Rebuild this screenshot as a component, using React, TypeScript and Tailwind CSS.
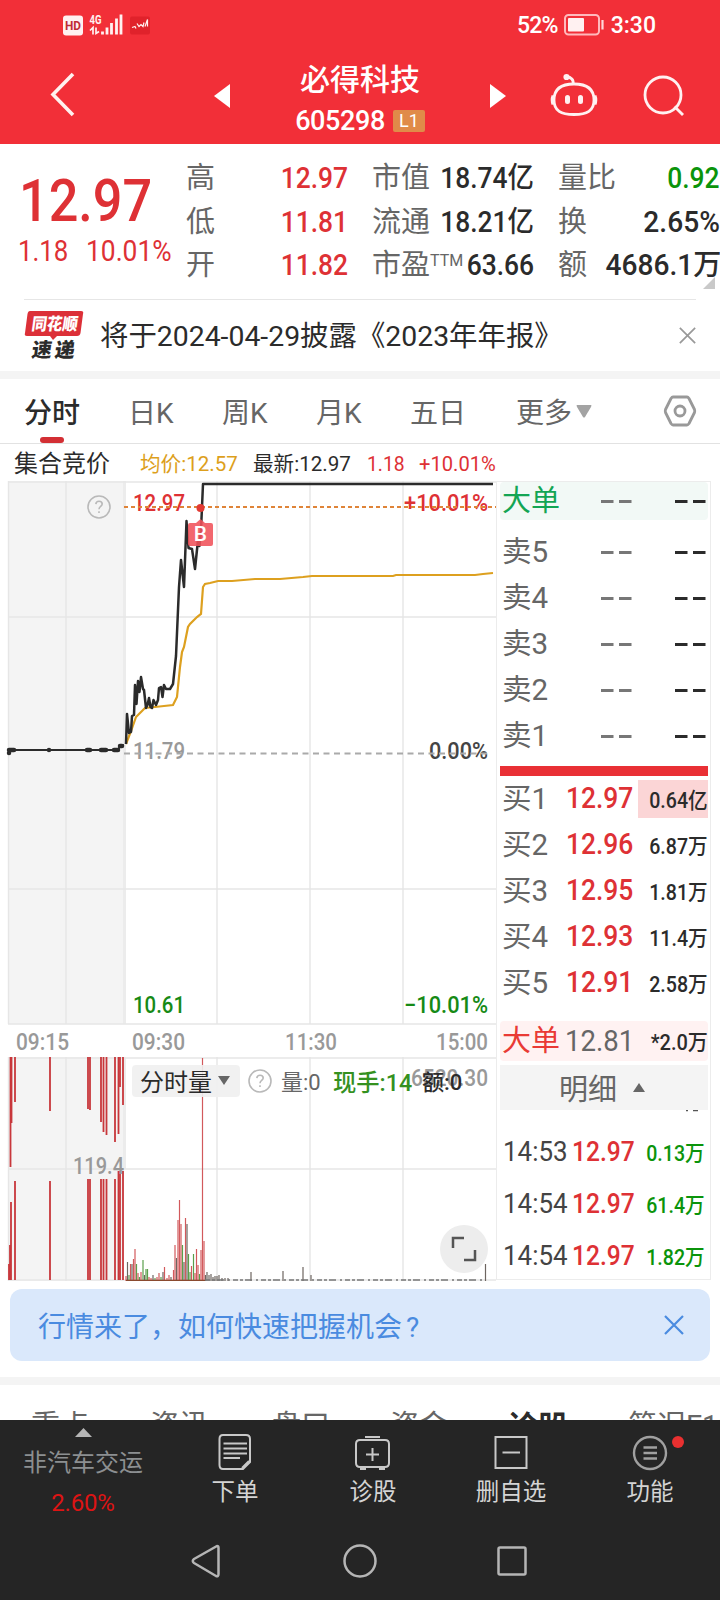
import type { ReactNode } from "react";
import clsx from "clsx";
import { twMerge } from "tailwind-merge";

const FONT = "font-['Roboto','Noto_Sans_CJK_SC',sans-serif]";

const QUOTES = [
  ["高", "12.97", "市值", "18.74亿", "量比", "0.92"],
  ["低", "11.81", "流通", "18.21亿", "换", "2.65%"],
  ["开", "11.82", "市盈", "63.66", "额", "4686.1万"],
];

const SELLS = ["卖5", "卖4", "卖3", "卖2", "卖1"];

const BUYS = [
  ["买1", "12.97", "0.64亿"],
  ["买2", "12.96", "6.87万"],
  ["买3", "12.95", "1.81万"],
  ["买4", "12.93", "11.4万"],
  ["买5", "12.91", "2.58万"],
];

const TICKS = [
  ["14:53", "12.97", "0.13万"],
  ["14:54", "12.97", "61.4万"],
  ["14:54", "12.97", "1.82万"],
];

// [x, length] hanging down from the top edge of the volume pane
const AUCTION_TOP = [
  [10.5, 110], [11.5, 66], [15, 45], [50, 54], [88, 52], [90, 53], [101, 65],
  [103.5, 75], [106.5, 78], [115, 85], [118.5, 77], [120, 30], [123, 48],
];

// [x, height] standing on the bottom edge
const AUCTION_BOTTOM = [
  [9, 16], [10, 35], [11, 78], [15, 99], [50, 99], [88, 101], [90, 101], [101, 101],
  [103.5, 101], [106.5, 101], [115, 101], [118.5, 109], [120, 109], [123, 109],
];

const VOLUME: [number, number, string][] = [
  [126, 5, "r"], [127.5, 19, "k"], [129, 6, "g"], [130.5, 17, "r"], [132, 17, "k"], [133.5, 22, "r"],
  [135, 32, "r"], [136.5, 17, "g"], [138, 8, "r"], [139.5, 4, "g"], [141, 9, "r"], [143, 21, "g"],
  [144.5, 6, "k"], [146, 12, "g"], [147.5, 12, "g"], [149, 4, "r"], [151, 3, "r"], [153, 6, "k"],
  [155, 3, "g"], [157, 4, "r"], [159, 8, "r"], [161, 4, "g"], [163, 9, "k"], [164.5, 14, "r"],
  [167, 3, "r"], [169, 6, "r"], [171, 4, "k"], [173.5, 11, "r"], [175, 36, "r"], [176.5, 23, "k"],
  [178, 61, "r"], [179.5, 81, "r"], [181, 57, "r"], [182.5, 36, "g"], [184, 19, "k"], [185.5, 63, "r"],
  [187, 57, "k"], [188.5, 27, "g"], [190, 9, "g"], [191.5, 15, "r"], [193.5, 27, "g"], [195, 8, "r"],
  [196.5, 32, "r"], [198, 16, "r"], [199.5, 7, "g"], [201, 31, "r"], [202.5, 223, "r"], [204, 40, "r"],
  [205.5, 6, "k"], [207, 9, "k"], [209, 6, "k"], [211, 7, "k"], [213, 4, "k"], [215, 5, "k"],
  [217, 5, "k"], [219, 6, "k"], [222, 3, "k"], [225, 3, "k"], [228, 3, "k"], [251, 9, "k"],
  [283, 10, "k"], [303, 14, "k"], [311, 6, "k"], [485.5, 17, "k"],
];

const BAR: Record<string, string> = { r: "#d2595c", g: "#5a9f4c", k: "#6d6560" };

const PRICE =
  "M126 744L127 714L129 733L131 732L132 716L134 715L135 685L136.5 704L138 681L139.5 692L141 677L143 689L144 690L146 708L147.5 705L149 698L150.5 707L152 708L153.5 700L156 705L158 700L159 688L161 687L162.5 697L164 685L166 689L170 689L173 684L176 656L179 587L181 560L184 587L186.5 521L188.5 548L192 549L195 569L198 540L199.5 546L201 530L203 484H493";

const AVERAGE =
  "M126 744L131 731L136 717L140 713L145 708L155 707L164 706L173 705L177 697L180 667L182 652L184 647L188 627L190 624L194 620L197 617L201 614L203 587L205 584L210 583L218 581L232 581L255 579L280 579L303 577L312 576H393L396 575H475L483 574L493 573";

// Narrow figures, squeezed towards one side
function Num({ end, className, children }: { end?: boolean; className?: string; children: ReactNode }) {
  return (
    <span className={twMerge("inline-block scale-x-[0.91] font-medium", end ? "origin-right" : "origin-left", className)}>
      {children}
    </span>
  );
}

function Help({ className }: { className?: string }) {
  return (
    <svg viewBox="0 0 24 24" className={clsx("h-6 w-6", className)} fill="none" stroke="#b9b9b9" strokeWidth="1.6">
      <circle cx="12" cy="12" r="11" />
      <path d="M8.8 9.2C9 7.3 10.300 6.300 12 6.300C14 6.300 15.200 7.500 15.200 9.100C15.200 11.400 12 11.600 12 14.200M12 16.200V18" />
    </svg>
  );
}

function Close({ size, color, width }: { size: number; color: string; width: number }) {
  return (
    <svg width={size} height={size} viewBox="0 0 20 20" fill="none" stroke={color} strokeWidth={width}>
      <path d="M1 1L19 19M19 1L1 19" />
    </svg>
  );
}

function Header() {
  return (
    <header className="h-36 bg-[#f22f38] text-white">
      <div className="flex h-12 items-center pt-px pr-16 pl-[63px]">
        <svg width="88" height="24" viewBox="63 12.500 88 24" className="overflow-visible">
          <rect x="63" y="15" width="20" height="20" rx="3" fill="#fff1f1" />
          <text x="65" y="29.500" fontFamily="Roboto" fontSize="13" fontWeight="700" textLength="16" lengthAdjust="spacingAndGlyphs" fill="#c02a35">HD</text>
          <text x="89.500" y="23" fontFamily="Roboto" fontSize="13" fontWeight="700" textLength="12" lengthAdjust="spacingAndGlyphs" fill="#fff1f1">4G</text>
          <path d="M90 30L93 27V34M96 27V33L99 31" stroke="#fff1f1" strokeWidth="1.700" fill="none" />
          <path d="M102.500 31V34M107 27V34M111.500 22.500V34M116.500 18V34M121 14V34" stroke="#fff1f1" strokeWidth="2.800" />
          <rect x="130" y="16" width="20" height="18" rx="2" fill="#e0222b" />
          <path d="M132 27L135 26L136 28M137 23L139 26L141 24L143 26L144 22M145 26L147.500 19V26" stroke="#fff1f1" strokeWidth="1.200" fill="none" />
        </svg>
        <div className={clsx(FONT, "ml-auto flex items-center pt-px text-[23px] leading-none font-medium")}>
          <span className="mr-1.5 tracking-[-0.8px]">52%</span>
          <svg width="41" height="22" viewBox="0 0 41 22">
            <rect x="1" y="1" width="34" height="19.500" rx="3.500" fill="none" stroke="#ffb9bc" strokeWidth="2" />
            <rect x="4" y="4" width="16" height="13.500" rx="1" fill="#fff1f1" />
            <path d="M38.500 6V15.500" stroke="#ffd6d8" strokeWidth="2.200" />
          </svg>
          <span className="ml-1.5">3:30</span>
        </div>
      </div>
      <div className="flex h-24 items-center pl-[49px]">
        <svg width="26" height="46" viewBox="0 0 26 46" className="mb-1" fill="none" stroke="#fff1ef" strokeWidth="3.600">
          <path d="M24 3L4 23.500L24 44" />
        </svg>
        <svg width="16" height="24" viewBox="0 0 16 24" className="ml-[139px]" fill="#fff">
          <path d="M0 12L16 0V24Z" />
        </svg>
        <div className="flex w-[260px] flex-col items-center pt-2">
          <h1 className="font-['Noto_Sans_CJK_SC',sans-serif] text-[30px] leading-9 font-medium">必得科技</h1>
          <div className="mt-1.5 flex h-10 items-center">
            <span className={clsx(FONT, "text-[27px] leading-none font-medium tracking-[-0.4px]")}>605298</span>
            <span className={clsx(FONT, "ml-2 flex h-[22px] w-8 items-center justify-center rounded-[2px] bg-[#e08b49] text-lg")}>L1</span>
          </div>
        </div>
        <svg width="16" height="24" viewBox="0 0 16 24" fill="#fff">
          <path d="M16 12L0 0V24Z" />
        </svg>
        <svg width="48" height="44" viewBox="550 73 48 44" className="mb-0.5 ml-11" fill="none" stroke="#fff1f1" strokeWidth="2.800">
          <path d="M573 84C574 80 571 77 567 77" />
          <circle cx="566.500" cy="77" r="1.700" fill="#fff1f1" />
          <path d="M574 84C587 84 594 89 594 100C594 111 587 114.500 574 114.500C561 114.500 554 111 554 100C554 89 561 84 574 84Z" />
          <path d="M553 95.500C552 98 552 102 553 104.500M595 95.500C596 98 596 102 595 104.500" />
          <path d="M567.500 97.500V101.500M580.500 97.500V101.500" strokeWidth="5" strokeLinecap="round" />
        </svg>
        <svg width="42" height="42" viewBox="643 75 42 42" className="ml-[45px]" fill="none" stroke="#fff1f1" strokeWidth="2.800">
          <circle cx="663" cy="95" r="18" />
          <path d="M674.500 106.500L683 115" />
        </svg>
      </div>
    </header>
  );
}

function Quote() {
  return (
    <section className={clsx(FONT, "relative flex h-[155px] text-[29px] text-[#2b2b2b]")}>
      <div className="w-[186px] shrink-0 pt-[30px] text-[#de3135]">
        <div className="pl-[19px] text-[60px] leading-[54px]">
          <Num className="scale-x-[0.87]">12.97</Num>
        </div>
        <div className="mt-[7px] flex pl-[18px] leading-8">
          <Num className="w-[68px] scale-x-[0.89] font-normal">1.18</Num>
          <Num className="w-[94px] scale-x-[0.91] font-normal">10.01%</Num>
        </div>
      </div>
      <div className="w-[534px] pt-[13px]">
        {QUOTES.map(([a, av, b, bv, c, cv], i) => (
          <div key={a} className="flex h-[43.500px] items-center leading-none whitespace-nowrap">
            <span className="w-[60px] shrink-0 text-[#666]">{a}</span>
            <span className="w-[102px] shrink-0 text-right text-[#de3135]">
              <Num end>{av}</Num>
            </span>
            <span className="ml-6 flex shrink-0 text-[#666]">
              {b}
              {i === 2 && <sup className="top-0 mt-0.5 text-base leading-none">TTM</sup>}
            </span>
            <span className="-ml-5 flex-1 text-right">
              <Num end>{bv}</Num>
            </span>
            <span className="ml-6 w-11 shrink-0 text-[#666]">{c}</span>
            <span className={clsx("w-[118px] shrink-0 text-right", i === 0 && "text-[#0b940b]")}>
              <Num end className={i === 0 ? "" : "scale-x-[0.97]"}>{cv}</Num>
            </span>
          </div>
        ))}
      </div>
      <svg width="12" height="12" className="absolute right-[5px] bottom-2.5" fill="#c9c9c9">
        <path d="M12 0V12H0Z" />
      </svg>
    </section>
  );
}

function News() {
  return (
    <section className="mx-6 flex h-[72px] items-center border-t border-[#e6e6e6]">
      <svg width="60" height="50" viewBox="24 310 60 50" className="mb-0.5 overflow-visible" fontFamily="'Noto Sans CJK SC', sans-serif" fontWeight="900">
        <path d="M30 311H81Q84 311 83 314L80.500 333Q80 336 77 336H57L53 340L50 336H27Q24 336 25 333L27.500 314Q28 311 30 311Z" fill="#dc3038" />
        <text transform="translate(31 330) skewX(-8)" fontSize="17" textLength="46" lengthAdjust="spacingAndGlyphs" fill="#fff">同花顺</text>
        <text transform="translate(31 357) skewX(-8)" fontSize="20" textLength="43" fill="#2b2b2b">速递</text>
      </svg>
      <span className={clsx(FONT, "mt-[3px] ml-4 text-[28.400px] leading-none whitespace-nowrap text-[#2b2b2b]")}>
        将于2024-04-29披露《2023年年报》
      </span>
      <span className="ml-auto">
        <Close size={17} color="#999" width={2} />
      </span>
    </section>
  );
}

function Tabs() {
  return (
    <nav className={clsx(FONT, "flex h-[65px] items-center border-b border-[#e2e2e2] pl-6 text-[28px] leading-none text-[#666]")}>
      <div className="flex pt-[5px]">
        <span className="relative w-[104px] font-medium text-[#2b2b2b]">
          分时
          <i className="absolute top-[37px] left-4 h-1.5 w-6 rounded-full bg-[#d32f34]" />
        </span>
        <span className="w-[94px]">日K</span>
        <span className="w-[94px]">周K</span>
        <span className="w-[94px]">月K</span>
        <span className="w-[106px]">五日</span>
        <span>更多</span>
      </div>
      <svg width="16" height="13" className="ml-1" fill="#a3a3a3">
        <path d="M1 0H15Q16 0 15 2L9 12Q8 13 7 12L1 2Q0 0 1 0Z" />
      </svg>
      <svg width="34" height="32" viewBox="0 0 34 32" className="ml-[71px]" fill="none" stroke="#999" strokeWidth="2.800" strokeLinejoin="round">
        <path d="M10 2H24Q25 2 26 3.500L31.500 14.500Q32 16 31.500 17.500L26 28.500Q25 30 24 30H10Q9 30 8 28.500L2.500 17.500Q2 16 2.500 14.500L8 3.500Q9 2 10 2Z" />
        <circle cx="17" cy="16" r="5" />
      </svg>
    </nav>
  );
}

function Legend() {
  return (
    <div className={clsx(FONT, "flex h-[37px] items-center pt-[3px] pl-3.5 text-[21px] leading-none whitespace-nowrap text-[#2b2b2b]")}>
      <span className="w-[126px] text-2xl">集合竞价</span>
      <Num className="w-[113px] scale-x-[0.98] font-normal text-[#dd9f1c]">均价:12.57</Num>
      <Num className="w-[114px] scale-x-[0.98] font-normal">最新:12.97</Num>
      <Num className="w-[52px] scale-x-[0.92] font-normal text-[#de3135]">1.18</Num>
      <Num className="scale-x-[0.96] font-normal text-[#de3135]">+10.01%</Num>
    </div>
  );
}

function Label({ x, y, w, fill, children }: { x: number; y: number; w: number; fill: string; children: ReactNode }) {
  return (
    <text x={x} y={y} textLength={w} lengthAdjust="spacingAndGlyphs" fontSize="24" fontWeight="500" fill={fill}>
      {children}
    </text>
  );
}

function PriceChart() {
  return (
    <svg width="496" height="576" viewBox="0 481 496 576" className="block" fontFamily="Roboto, sans-serif">
      <rect x="8" y="481" width="116" height="543" fill="#f4f4f4" />
      <rect x="123" y="481" width="3" height="543" fill="#ececec" />
      <path d="M8.500 481V1024M66 481V1024M217 481V1024M310 481V1024M403 481V1024M8 482H496M8 617H496M8 889H496M8 1024H496" stroke="#e6e6e6" strokeWidth="1.400" />
      <Label x={133} y={511} w={52} fill="#de3135">12.97</Label>
      <Label x={404} y={511} w={84} fill="#de3135">+10.01%</Label>
      <Label x={133} y={759} w={52} fill="#999">11.79</Label>
      <Label x={429} y={759} w={59} fill="#444">0.00%</Label>
      <Label x={133} y={1013} w={52} fill="#168a16">10.61</Label>
      <Label x={404} y={1013} w={84} fill="#168a16">−10.01%</Label>
      <path d="M124 507H496" stroke="#df8438" strokeWidth="2" strokeDasharray="4 3" />
      <path d="M124 753.500H487" stroke="#aaa" strokeWidth="2" strokeDasharray="6 4.500" />
      <path d={AVERAGE} fill="none" stroke="#dda01f" strokeWidth="2.200" />
      <path d={PRICE} fill="none" stroke="#2b2b2b" strokeWidth="2.500" strokeLinejoin="round" />
      <path d="M8 753L10 750H118L120 746L124 745" fill="none" stroke="#2b2b2b" strokeWidth="2" />
      <path d="M9 753V753.100M9 750H14M49 750V750.100M87 750H90M101 750H106M114 750H118M120 746H122" stroke="#2b2b2b" strokeWidth="4.500" strokeLinecap="round" />
      <path d="M190 523H196L200.500 519L205 523H211Q213 523 213 525V544Q213 546 211 546H190Q188 546 188 544V525Q188 523 190 523Z" fill="#f0525a" fillOpacity="0.880" />
      <text x="200.500" y="541" textAnchor="middle" fontSize="21" fontWeight="500" fill="#fff">B</text>
      <circle cx="200.500" cy="508" r="4" fill="#e23a34" />
      <Label x={16} y={1050} w={53} fill="#999">09:15</Label>
      <Label x={132} y={1050} w={53} fill="#999">09:30</Label>
      <Label x={285} y={1050} w={52} fill="#999">11:30</Label>
      <Label x={436} y={1050} w={52} fill="#999">15:00</Label>
    </svg>
  );
}

function VolumeChart() {
  return (
    <svg width="496" height="224" viewBox="0 0 496 224" className="block" fontFamily="Roboto, sans-serif">
      <rect x="8" y="0" width="116" height="224" fill="#f4f4f4" />
      <rect x="123" y="0" width="3" height="112" fill="#ececec" />
      <path d="M8.500 0V224M66 0V224M217 0V224M310 0V224M403 0V224M8 1H496M8 112H496M8 223H496" stroke="#e6e6e6" strokeWidth="1.400" />
      <g stroke="#c8373b" strokeWidth="1.800">
        {AUCTION_TOP.map(([x, h]) => (
          <path key={x} d={`M${x} 0V${h}`} />
        ))}
        {AUCTION_BOTTOM.map(([x, h]) => (
          <path key={x} d={`M${x} 223V${223 - h}`} />
        ))}
      </g>
      {VOLUME.map(([x, h, c]) => (
        <path key={x} d={`M${x} 224V${224 - h}`} stroke={BAR[c]} strokeWidth="1.200" />
      ))}
      <path d="M126 223.500H205" stroke="#8a4a2f" strokeWidth="1.500" />
      <path d="M205 223H485" stroke="#777" strokeWidth="1.500" strokeDasharray="5 2 3 2 7 4 2 3" />
      <Label x={73} y={117} w={51} fill="#999">119.4</Label>
      <Label x={411} y={29} w={77} fill="#999">6520.30</Label>
    </svg>
  );
}

function Chart() {
  return (
    <div className="relative w-[496px]">
      <PriceChart />
      <VolumeChart />
      <Help className="absolute top-3.5 left-[87px]" />
      <div className={clsx(FONT, "absolute top-[584px] left-[132px] flex h-8 items-center text-[22px] leading-none font-medium whitespace-nowrap text-[#2b2b2b]")}>
        <span className="flex h-8 w-[108px] items-center justify-between rounded-sm bg-[#f0f0f0]/90 pr-2.5 pl-2 text-[24px] font-normal">
          <span className="pt-1">分时量</span>
          <svg width="12" height="10" fill="#666">
            <path d="M0 0H12L6 9Z" />
          </svg>
        </span>
        <Help className="ml-2" />
        <span className="ml-[9px] w-[52px] pt-1 font-normal text-[#666]">量:0</span>
        <span className="w-[89px] pt-1 text-[#35911f]">
          <Num className="scale-x-[0.97] text-[24px]">现手:14</Num>
        </span>
        <span className="pt-1">额:0</span>
      </div>
      <button className="absolute top-[744px] left-[440px] flex h-12 w-12 items-center justify-center rounded-full bg-[#ededed]">
        <svg width="26" height="26" fill="none" stroke="#555" strokeWidth="2.500">
          <path d="M2 12V2H13M24 14V24H13" />
        </svg>
      </button>
    </div>
  );
}

function Dashes({ color, className }: { color: string; className?: string }) {
  return (
    <svg width="31" height="3" className={className}>
      <path d="M0 1.500H12.500M18 1.500H30.500" stroke={color} strokeWidth="2.800" />
    </svg>
  );
}

function OrderBook() {
  return (
    <aside className={clsx(FONT, "h-[799px] w-[215px] border border-[#ececec] pr-0.5 pl-[3px] text-[29px] leading-none whitespace-nowrap text-[#666]")}>
      <div className="flex h-[38px] items-center rounded-sm bg-[#f2f9f6] pl-0.5 text-[#13a554]">
        <span className="w-[99px]">大单</span>
        <Dashes color="#777" />
        <Dashes color="#2b2b2b" className="ml-[43px]" />
      </div>
      <div className="pt-[9px]">
        {SELLS.map((s) => (
          <div key={s} className="flex h-[46px] items-center pl-0.5">
            <Num className="w-[99px] scale-x-[1.02] font-normal">{s}</Num>
            <Dashes color="#777" />
            <Dashes color="#2b2b2b" className="ml-[43px]" />
          </div>
        ))}
      </div>
      <div className="mt-[7px] h-2.5 bg-[#e93035]" />
      {BUYS.map(([name, price, vol], i) => (
        <div key={name} className="flex h-[46px] items-center pl-0.5">
          <span className="w-16">
            <Num className="scale-x-[1.02] font-normal">{name}</Num>
          </span>
          <span className="w-[72px] pb-0.5 text-[#de3135]">
            <Num>{price}</Num>
          </span>
          <span className={clsx("flex h-[38px] flex-1 items-center justify-end pt-1 text-[22px] text-[#2b2b2b]", i === 0 && "bg-[#fbd5d6]")}>
            <Num end className="scale-x-[0.89]">{vol}</Num>
          </span>
        </div>
      ))}
      <div className="mt-[15px] flex h-10 items-center rounded-sm bg-[#fff2f2] pl-0.5">
        <span className="w-[63px] shrink-0 text-[#e93a35]">大单</span>
        <Num className="scale-x-[0.95] font-normal">12.81</Num>
        <Num end className="ml-auto pt-1 text-[22px] text-[#2b2b2b]">*2.0万</Num>
      </div>
      <div className="mt-1 flex h-[45px] items-center bg-[#f4f4f4] pl-[59px]">
        <span className="pt-1.5">明细</span>
        <svg width="12" height="9" className="ml-4" fill="#666">
          <path d="M6 0L12 9H0Z" />
        </svg>
      </div>
      <svg width="16" height="2" className="mr-2 ml-auto block" stroke="#555" strokeWidth="1.500">
        <path d="M2 0.500H4M9 0.500H14" />
      </svg>
      <div className="pt-3.5">
        {TICKS.map(([time, price, vol], i) => (
          <div key={i} className="flex h-[52px] items-center pl-[3px] text-[27px]">
            <span className="w-[69px] shrink-0 text-[#444]">
              <Num className="scale-x-[0.96] font-normal">{time}</Num>
            </span>
            <Num className="w-16 shrink-0 text-[#de3135]">{price}</Num>
            <span className="flex flex-1 justify-end pt-1 pr-[3px] text-[22px] text-[#0b940b]">
              <Num end className="scale-x-[0.89]">{vol}</Num>
            </span>
          </div>
        ))}
      </div>
    </aside>
  );
}

function NavItem({ label, className, children }: { label: string; className: string; children: ReactNode }) {
  return (
    <div className={clsx("flex flex-col items-center pt-[11px]", className)}>
      <svg width="44" height="42" viewBox="0 0 44 42" fill="none" stroke="#c8c8c8" strokeWidth="2" className="overflow-visible">
        {children}
      </svg>
      <span className="mt-2 text-[23.500px] leading-none whitespace-nowrap text-[#d4d4d4]">{label}</span>
    </div>
  );
}

function BottomBar() {
  return (
    <footer className={clsx(FONT, "h-[180px] bg-[#252525]")}>
      <div className="flex h-[100px]">
        <div className="flex w-[166px] flex-col items-center pt-2">
          <svg width="17" height="9" fill="#b5b5b5">
            <path d="M8.500 0L17 9H0Z" />
          </svg>
          <span className="mt-3.5 text-[24px] leading-none text-[#8c8f91]">非汽车交运</span>
          <span className="mt-4 text-[24px] leading-none tracking-[-0.2px] text-[#dd1414]">2.60%</span>
        </div>
        <NavItem label="下单" className="w-[138px]">
          <path d="M10 4H33Q37 4 37 8V31L30 38H10Q6.500 38 6.500 34V8Q6.500 4 10 4ZM36 30L29 37M10.500 12.500H34M10.500 17.500H34M10.500 22.500H34M10.500 27H27" />
        </NavItem>
        <NavItem label="诊股" className="w-[138px]">
          <path d="M9 9H34Q38 9 38 13V32Q38 36 34 36H9Q5 36 5 32V13Q5 9 9 9ZM14 6H29M9 38H15M28 38H34M21.500 17V30M15 23.500H28" />
        </NavItem>
        <NavItem label="删自选" className="w-[138px]">
          <path d="M6.500 6H37.500V37H6.500ZM13.500 21.500H31" />
        </NavItem>
        <NavItem label="功能" className="w-[140px]">
          <g stroke="#a0a0a0" strokeWidth="2.400">
            <circle cx="22" cy="22" r="16" />
            <path d="M15.500 16.500H29M15.500 22H29M15.500 27.500H29" />
          </g>
          <circle cx="50" cy="11" r="6" fill="#e93030" stroke="none" />
        </NavItem>
      </div>
      <svg width="720" height="80" viewBox="0 1520 720 80" className="block" fill="none" stroke="#b5b5b5" strokeWidth="2.500" strokeLinejoin="round">
        <path d="M217 1546Q218.500 1546 218.500 1548V1574Q218.500 1577 216 1576L194 1563Q191.500 1561 194 1559Z" />
        <circle cx="360" cy="1561" r="15.500" />
        <rect x="498.500" y="1547.500" width="27" height="27" rx="1.500" />
      </svg>
    </footer>
  );
}

export default function App() {
  return (
    <main className="h-[1600px] w-[720px] overflow-hidden bg-white">
      <Header />
      <Quote />
      <News />
      <div className="h-2 bg-[#f4f4f4]" />
      <Tabs />
      <Legend />
      <div className="flex h-[799px]">
        <Chart />
        <OrderBook />
      </div>
      <div className={clsx(FONT, "mx-2.5 mt-[9px] flex h-[72px] items-center rounded-xl bg-[#dae8fb] pr-[26px] pl-7 text-[28px] leading-none text-[#4a8be0]")}>
        <span className="pt-1.5">
          行情来了，如何快速把握机会<span className="ml-1">?</span>
        </span>
        <span className="ml-auto">
          <Close size={20} color="#4a8be0" width={2.2} />
        </span>
      </div>
      <div className="mt-4 h-2 bg-[#f4f4f4]" />
      <div className={clsx(FONT, "flex h-[35px] items-start overflow-hidden pt-[27px] pl-[31px] text-[29px] leading-none whitespace-nowrap text-[#666]")}>
        <span className="w-[119px] shrink-0">重点</span>
        <span className="w-[122px] shrink-0">资讯</span>
        <span className="w-[118px] shrink-0">盘口</span>
        <span className="w-[117px] shrink-0">资金</span>
        <span className="w-[121px] shrink-0 text-[31px] font-bold text-[#2b2b2b]">诊股</span>
        <span>简况F10</span>
      </div>
      <BottomBar />
    </main>
  );
}
